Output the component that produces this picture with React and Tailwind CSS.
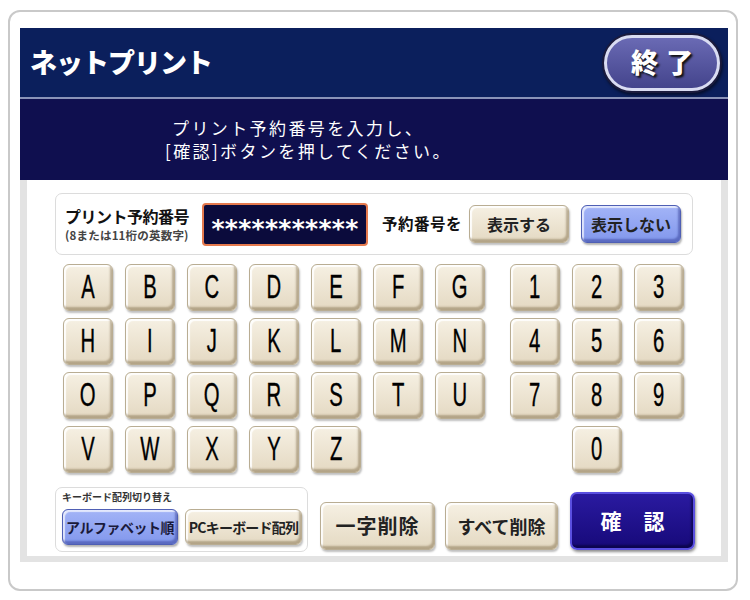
const LETTER_ROWS = [
  ['A', 'B', 'C', 'D', 'E', 'F', 'G'],
  ['H', 'I', 'J', 'K', 'L', 'M', 'N'],
  ['O', 'P', 'Q', 'R', 'S', 'T', 'U'],
  ['V', 'W', 'X', 'Y', 'Z', '', ''],
]

const NUMBER_ROWS = [
  ['1', '2', '3'],
  ['4', '5', '6'],
  ['7', '8', '9'],
  ['', '0', ''],
]

const jp = { fontFamily: '"Noto Sans CJK JP", "Noto Sans", sans-serif' }
const latin = { fontFamily: '"Liberation Sans", Arial, sans-serif' }

const beige =
  'bg-gradient-to-b from-[#f6f0e3] to-[#e4d9c2] border border-[#b9ad93] shadow-[inset_-2px_-3px_2px_rgba(120,100,65,0.45),inset_2px_2px_1px_rgba(255,255,255,0.9),1px_2px_2px_rgba(0,0,0,0.25)]'
const blue =
  'bg-gradient-to-b from-[#a3b4f7] to-[#8297ec] border border-[#4f5fb4] shadow-[inset_-2px_-3px_2px_rgba(40,50,140,0.45),inset_2px_2px_1px_rgba(255,255,255,0.7),1px_2px_2px_rgba(0,0,0,0.3)]'

function Key({ label }) {
  if (!label) return <div className="w-[50px] h-[47px]" />
  return (
    <div className={`w-[50px] h-[47px] rounded-[6px] flex items-center justify-center text-black ${beige}`}>
      <span className="inline-block text-[27px] leading-none scale-x-75 scale-y-125 [-webkit-text-stroke:0.3px_black]" style={latin}>
        {label}
      </span>
    </div>
  )
}

export default function App() {
  return (
    <div className="w-[750px] h-[600px] bg-white pt-[10px] pl-[8px]" style={jp}>
      <div className="w-[730px] h-[581px] border-2 border-[#c9c9c9] rounded-[12px] pt-[16px] pl-[10px]">
        <div className="w-[708px]">
          {/* header */}
          <div className="h-[69px] bg-[#0b1f5c] flex items-center justify-between pl-[10px] pr-[6px]">
            <span className="text-white text-[27px] font-black tracking-[-1px]">ネットプリント</span>
            <div className="w-[120px] h-[60px] rounded-full bg-[#1b1b3d] p-[2px] shadow-[1px_2px_3px_rgba(0,0,0,0.5)]">
              <div className="w-full h-full rounded-full border-[3px] border-[#d9dcf2] bg-gradient-to-b from-[#6a6ab4] to-[#44448c] flex items-center justify-center gap-[8px] text-white text-[27px] font-black [text-shadow:2px_2px_2px_#111]">
                <span>終</span>
                <span>了</span>
              </div>
            </div>
          </div>
          <div className="h-[2px] bg-[#8a93b8]" />
          {/* instructions */}
          <div className="h-[81px] bg-[#0f0f4f] flex flex-col justify-center pl-[145px] pb-[2px] text-white text-[17px] leading-[23px] tracking-[2.4px]">
            <div className="pl-[7px]">プリント予約番号を入力し、</div>
            <div>[確認]ボタンを押してください。</div>
          </div>
          {/* content */}
          <div className="h-[382px] bg-white border-x-[7px] border-b-[6px] border-[#e3e3e3] pt-[13px] pl-[28px]">
            <div className="w-[638px] h-[62px] border border-[#dcdcdc] rounded-[7px] flex items-center pl-[9px]">
              <div className="w-[137px] flex flex-col">
                <span className="text-[16px] font-bold leading-[21px] tracking-[-0.5px] text-[#111]">プリント予約番号</span>
                <span className="text-[11.5px] font-bold leading-[16px] text-[#444] tracking-[0.2px]">(8または11桁の英数字)</span>
              </div>
              <div className="w-[166px] h-[43px] bg-[#0b0b3c] border-2 border-[#e57a4e] rounded-[4px] flex items-center justify-center pt-[9px] text-white text-[25px] font-bold leading-none tracking-[0.3px]" style={{ fontFamily: '"DejaVu Sans", sans-serif' }}>
                ***********
              </div>
              <span className="ml-[14px] text-[15.5px] font-bold tracking-[0.5px] text-[#111]">予約番号を</span>
              <div className={`ml-[7px] w-[100px] h-[38px] rounded-[6px] flex items-center justify-center text-[16px] font-bold text-[#222] ${beige}`}>
                表示する
              </div>
              <div className={`ml-[12px] w-[100px] h-[38px] rounded-[6px] flex items-center justify-center text-[16px] font-bold text-[#222] ${blue}`}>
                表示しない
              </div>
            </div>

            {/* keys */}
            <div className="flex mt-[9px] ml-[8px]">
              <div className="grid grid-cols-7 gap-x-[12px] gap-y-[7px]">
                {LETTER_ROWS.flat().map((k, i) => (
                  <Key key={i} label={k} />
                ))}
              </div>
              <div className="ml-[25px] grid grid-cols-3 gap-x-[12px] gap-y-[7px]">
                {NUMBER_ROWS.flat().map((k, i) => (
                  <Key key={i} label={k} />
                ))}
              </div>
            </div>

            {/* bottom row */}
            <div className="flex items-end mt-[14px]">
              <div className="w-[253px] h-[65px] border border-[#dcdcdc] rounded-[7px] pl-[6px] pt-[2px]">
                <div className="text-[10px] font-bold leading-[14px] text-[#333]">キーボード配列切り替え</div>
                <div className="flex gap-[7px] mt-[5px]">
                  <div className={`w-[116px] h-[36px] rounded-[6px] flex items-center justify-center text-[14px] font-bold text-[#1a1a3a] tracking-[-0.5px] ${blue}`}>
                    アルファベット順
                  </div>
                  <div className={`w-[117px] h-[36px] rounded-[6px] flex items-center justify-center text-[14px] font-bold text-[#222] tracking-[-0.8px] ${beige}`}>
                    PCキーボード配列
                  </div>
                </div>
              </div>
              <div className={`ml-[12px] mb-[2px] w-[115px] h-[48px] rounded-[6px] flex items-center justify-center text-[20px] font-bold text-[#222] tracking-[1px] ${beige}`}>
                一字削除
              </div>
              <div className={`ml-[10px] mb-[2px] w-[113px] h-[48px] rounded-[6px] flex items-center justify-center text-[18px] font-bold text-[#222] ${beige}`}>
                すべて削除
              </div>
              <div className="ml-[12px] mb-[2px] w-[125px] h-[58px] rounded-[7px] bg-gradient-to-b from-[#2a1aa0] to-[#17097a] border-2 border-[#5a4fe0] shadow-[inset_-2px_-3px_2px_rgba(0,0,40,0.5),1px_2px_3px_rgba(0,0,0,0.45)] flex items-center justify-center gap-[22px] text-white text-[21px] font-bold">
                <span>確</span>
                <span>認</span>
              </div>
            </div>
          </div>
        </div>
      </div>
    </div>
  )
}
